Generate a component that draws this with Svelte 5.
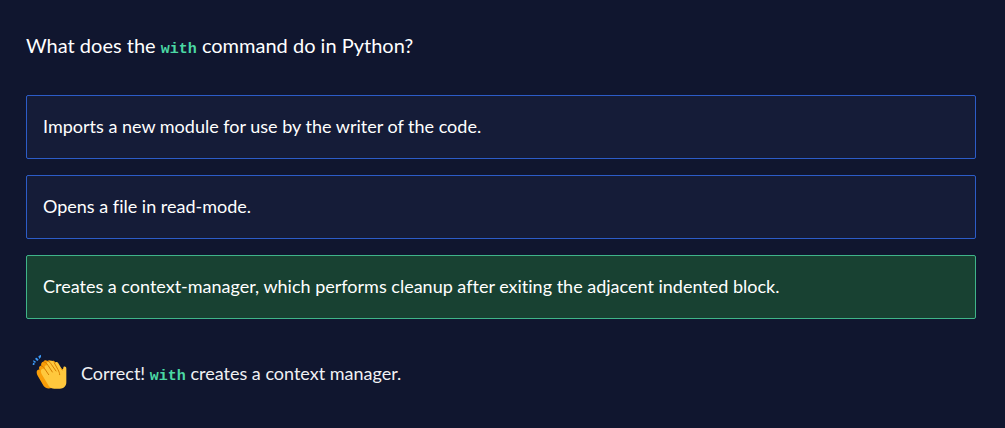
<script>
  const options = [
    { text: 'Imports a new module for use by the writer of the code.', correct: false },
    { text: 'Opens a file in read-mode.', correct: false },
    {
      text: 'Creates a context-manager, which performs cleanup after exiting the adjacent indented block.',
      correct: true
    }
  ];
</script>

<main class="quiz">
  <h1 class="question">What does the <code>with</code> command do in Python?</h1>

  <div class="options">
    {#each options as option}
      <button type="button" class="option" class:correct={option.correct}>{option.text}</button>
    {/each}
  </div>

  <div class="feedback">
    <svg class="clap" viewBox="0 0 108 108" aria-hidden="true">
      <g fill="#3b97f3">
        <path d="M3 19l8 3-1 5-5-2zM3 26l5 2-1 5H2z" />
        <path d="M10 12l4-1 6 6-4 4-5-4z" />
        <path d="M19 7l8-5v7l-5 6z" />
      </g>
      <path
        fill="#f99d08"
        d="M14 55c0-6 4-9 9-8-4-7-1-12 5-12-2-7 1-12 7-12 0-4 7-6 11-2 4-4 10-3 13 1 3-3 8-2 10 2l14 27-5 49-24 3c-8 2-14-1-19-7L17 65c-2-3-3-6-3-10z"
      />
      <path
        fill="#ffc83d"
        d="M27 49c2-5 8-6 12-2-4-8 0-14 7-13-4-8 1-14 8-12 1-3 8-3 11 2l3 4c3-6 9-5 12 1l8 14c4 5 6 2 6-2 0-6 10-5 9 3v41c0 12-9 19-19 19H67c-7 0-13-3-17-9L30 62c-3-5-4-9-3-13z"
      />
      <g fill="none" stroke="#d67d00" stroke-width="3" stroke-linecap="round">
        <path d="M28 36c4 0 7 3 10 8l12 18" />
        <path d="M36 24c5 0 9 5 12 10l13 20" />
        <path d="M48 22c5 0 7 5 10 9l14 20" />
        <path d="M67 27l11 20c3 6 5 10 5 15M88 44l3 4" />
      </g>
    </svg>
    <p class="message">Correct! <code>with</code> creates a context manager.</p>
  </div>
</main>

<style>
  :global(body) {
    margin: 0;
    background: #10162f;
  }

  .quiz {
    padding: 30px 29px 32px 26px;
    color: #fff;
    font-family: Apercu, Lato, sans-serif;
    font-variant-ligatures: none;
  }

  .question {
    margin: 0;
    font-size: 20px;
    font-weight: 400;
    line-height: 30px;
  }

  code {
    color: #4bd8a4;
    font-family: "Liberation Mono", monospace;
    font-size: 15px;
    font-weight: 700;
    line-height: 1;
  }

  .options {
    display: flex;
    flex-direction: column;
    gap: 16px;
    margin-top: 35px;
  }

  .option {
    padding: 15px 16px 17px;
    border: 1px solid #2c5cc8;
    border-radius: 2px;
    background: #151c38;
    color: inherit;
    font: inherit;
    font-size: 18px;
    font-variant-ligatures: none;
    line-height: 30px;
    text-align: left;
    cursor: pointer;
  }

  .correct {
    border-color: #3fb489;
    background: #184132;
  }

  .feedback {
    display: flex;
    align-items: center;
    gap: 13px;
    margin-top: 35px;
    padding-left: 6px;
  }

  .clap {
    flex: none;
    width: 36px;
    height: 36px;
  }

  .message {
    margin: 0;
    padding-top: 2px;
    color: #f0f1f4;
    font-size: 18px;
    line-height: 30px;
  }
</style>
